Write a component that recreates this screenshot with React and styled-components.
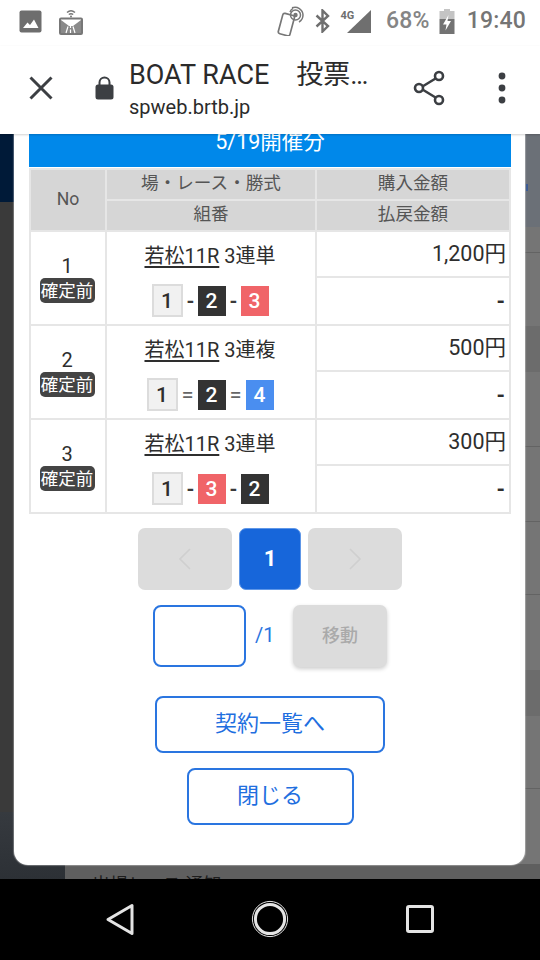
import React from "react";
import styled, { createGlobalStyle } from "styled-components";

const Global = createGlobalStyle`
  html, body { margin: 0; padding: 0; background: #000; }
  #root { width: 540px; height: 960px; }
  * { box-sizing: border-box; }
`;

const FONT = `Roboto, "Noto Sans CJK JP", "Noto Sans", sans-serif`;

const Screen = styled.div`
  width: 540px;
  height: 960px;
  display: flex;
  flex-direction: column;
  overflow: hidden;
  font-family: ${FONT};
`;

const StatusBar = styled.div`
  height: 46px;
  flex: none;
  background: #fff;
  display: flex;
  align-items: center;
  padding: 0 14px 4px 19px;
  color: #7a7a7a;
`;
const StatusIcon = styled.svg`
  display: block;
  flex: none;
  margin-left: ${(p) => p.$ml || 0}px;
`;
const StatusText = styled.span`
  font-size: 23px;
  font-weight: 500;
  line-height: 30px;
  color: ${(p) => p.$color};
  margin-left: ${(p) => p.$ml}px;
  letter-spacing: 0.2px;
`;
const Spacer = styled.div`
  flex: 1;
`;

const Toolbar = styled.div`
  height: 88px;
  flex: none;
  background: #fff;
  display: flex;
  align-items: center;
  padding: 0 34px 5px 29px;
  position: relative;
  z-index: 2;
  box-shadow: 0 1px 2px rgba(0, 0, 0, 0.18);
`;
const TitleBlock = styled.div`
  flex: 1;
  margin: 3px 0 0 15px;
  min-width: 0;
  color: #2b2b2b;
`;
const Title = styled.div`
  font-size: 27px;
  line-height: 32px;
  white-space: pre;
`;
const Url = styled.div`
  font-size: 20px;
  line-height: 24px;
  margin-top: 4px;
`;

const Content = styled.div`
  flex: 1;
  position: relative;
  overflow: hidden;
  display: grid;
  grid-template-columns: 65px 1fr;
`;

const SideColumn = styled.div`
  display: flex;
  flex-direction: column;
`;
const SideBlock = styled.div`
  height: ${(p) => p.$h}px;
  flex: ${(p) => (p.$h ? "none" : 1)};
  background: ${(p) => p.$bg};
`;
const MainColumn = styled.div`
  display: flex;
  flex-direction: column;
`;
const TopBand = styled.div`
  height: 93px;
  background: #6b7077;
  display: flex;
  justify-content: flex-end;
  align-items: flex-end;
  padding: 0 12px 36px 0;
`;
const Mark = styled.div`
  width: 2px;
  height: 7px;
  background: #3b5a92;
`;
const Row = styled.div`
  height: ${(p) => p.$h}px;
  background: ${(p) => (p.$dark ? "#6c6c6c" : "#757575")};
  border-bottom: ${(p) => (p.$line ? "1px solid #636363" : "none")};
`;
const BottomRow = styled.div`
  flex: 1;
  background: #5f5f5f;
  padding: 10px 0 0 27px;
  font-size: 18px;
  line-height: 22px;
  color: #1d1d1d;
  white-space: nowrap;
  overflow: hidden;
`;

const Modal = styled.div`
  position: absolute;
  left: 14px;
  top: -17px;
  width: 511px;
  background: #fff;
  border-radius: 0 0 14px 14px;
  padding: 0 14px 40px 15px;
  display: flex;
  flex-direction: column;
  align-items: center;
  box-shadow: 0 0 1px 1px rgba(255, 255, 255, 0.3);
`;
const DateBar = styled.div`
  width: 482px;
  height: 50px;
  background: #0088ea;
  color: #fff;
  font-size: 21.5px;
  line-height: 50px;
  text-align: center;
`;

const Table = styled.table`
  width: 482px;
  table-layout: fixed;
  border-collapse: collapse;
  margin-top: 1px;
  color: #2e2e2e;
  border: 2px solid #e6e6e6;
`;
const Th = styled.th`
  background: #d6d6d6;
  border: 2px solid #e6e6e6;
  color: #555;
  font-weight: 400;
  font-size: 17.6px;
  height: 31px;
  padding: 0 0 3px;
  line-height: 26px;
  text-align: center;
`;
const Td = styled.td`
  border: 2px solid #e6e6e6;
  padding: 0;
  background: #fff;
  vertical-align: top;
`;
const NoCell = styled(Td)`
  text-align: center;
  vertical-align: top;
  padding: 20px 2px 0 0;
`;
const No = styled.div`
  font-size: 20px;
  line-height: 28px;
`;
const Badge = styled.div`
  display: inline-block;
  width: 55px;
  height: 25px;
  margin-top: -2px;
  border-radius: 5px;
  background: #444;
  color: #fff;
  font-size: 17.5px;
  line-height: 26px;
  vertical-align: top;
  white-space: nowrap;
`;
const RaceCell = styled(Td)`
  text-align: center;
  padding-right: 2px;
`;
const RaceName = styled.div`
  font-size: 20px;
  line-height: 30px;
  margin-top: 9px;
  white-space: nowrap;
`;
const Venue = styled.span`
  text-decoration: underline;
  text-underline-offset: 3px;
`;
const Combo = styled.div`
  display: flex;
  justify-content: center;
  align-items: center;
  gap: 4px;
  margin: 13px 0 0;
  height: 33px;
`;
const Chip = styled.span`
  width: 28px;
  height: 30px;
  display: flex;
  align-items: center;
  justify-content: center;
  font-size: 21px;
  font-weight: 500;
  background: ${(p) => p.$bg};
  color: #fff;
`;
const FirstChip = styled.span`
  width: 31px;
  height: 33px;
  display: flex;
  align-items: center;
  justify-content: center;
  font-size: 21px;
  font-weight: 500;
  background: #f1f1f1;
  border: 2px solid #dcdcdc;
  color: #2e2e2e;
`;
const Sep = styled.span`
  width: ${(p) => (p.$eq ? 12 : 7)}px;
  font-size: ${(p) => (p.$eq ? 22 : 20)}px;
  font-weight: ${(p) => (p.$eq ? 400 : 700)};
  line-height: 24px;
  text-align: center;
  color: ${(p) => (p.$eq ? "#666" : "#3a3a3a")};
`;
const Amount = styled(Td)`
  height: 46px;
  text-align: right;
  padding: 6px 3px 0 0;
  font-size: 21.5px;
  line-height: 32px;
`;
const Payout = styled(Td)`
  height: 48px;
  text-align: right;
  padding: 8px 4px 0 0;
  font-size: 21.5px;
  line-height: 32px;
  font-weight: 700;
`;

const Pager = styled.div`
  display: flex;
  gap: 7px;
  margin-top: 14px;
`;
const PageArrow = styled.div`
  width: 94px;
  height: 62px;
  border-radius: 7px;
  background: #dcdcdc;
  display: flex;
  align-items: center;
  justify-content: center;
`;
const PageCurrent = styled.div`
  width: 62px;
  height: 62px;
  border-radius: 7px;
  background: #1766da;
  border: 1px solid #5f97e8;
  color: #fff;
  font-size: 22px;
  font-weight: 700;
  display: flex;
  align-items: center;
  justify-content: center;
  padding-bottom: 2px;
`;
const JumpRow = styled.div`
  display: flex;
  align-items: center;
  margin-top: 15px;
`;
const PageInput = styled.div`
  width: 93px;
  height: 62px;
  border: 2px solid #2a75e0;
  border-radius: 8px;
  background: #fff;
`;
const PageTotal = styled.span`
  width: 47px;
  padding: 0 0 2px 9px;
  color: #2a75e0;
  font-size: 20px;
`;
const MoveButton = styled.div`
  width: 94px;
  height: 62px;
  border-radius: 7px;
  background: #dcdcdc;
  color: #aaa;
  font-size: 18px;
  font-weight: 500;
  display: flex;
  align-items: center;
  justify-content: center;
  padding-bottom: 5px;
  box-shadow: 0 2px 4px rgba(0, 0, 0, 0.2);
`;
const OutlineButton = styled.div`
  width: ${(p) => p.$w}px;
  height: ${(p) => p.$h}px;
  margin-top: ${(p) => p.$mt}px;
  border: 2px solid #2a75e0;
  border-radius: 8px;
  color: #1f6fdf;
  font-size: 22px;
  display: flex;
  align-items: center;
  justify-content: center;
  padding-bottom: 7px;
  background: #fff;
`;

const NavBar = styled.div`
  height: 81px;
  flex: none;
  background: #000;
  display: grid;
  grid-template-columns: 240px 60px 240px;
  align-items: center;
  justify-items: center;
  padding-bottom: 1px;
`;

const bets = [
  { no: 1, type: "3連単", amount: "1,200円", sep: "-", picks: [1, 2, 3] },
  { no: 2, type: "3連複", amount: "500円", sep: "=", picks: [1, 2, 4] },
  { no: 3, type: "3連単", amount: "300円", sep: "-", picks: [1, 3, 2] },
];
const chipColor = { 2: "#333333", 3: "#f06468", 4: "#4a8ef0" };

const BetRows = ({ bet }) => (
  <>
    <tr>
      <NoCell rowSpan={2}>
        <No>{bet.no}</No>
        <Badge>確定前</Badge>
      </NoCell>
      <RaceCell rowSpan={2}>
        <RaceName>
          <Venue>若松11R</Venue> {bet.type}
        </RaceName>
        <Combo>
          <FirstChip>{bet.picks[0]}</FirstChip>
          <Sep $eq={bet.sep === "="}>{bet.sep}</Sep>
          <Chip $bg={chipColor[bet.picks[1]]}>{bet.picks[1]}</Chip>
          <Sep $eq={bet.sep === "="}>{bet.sep}</Sep>
          <Chip $bg={chipColor[bet.picks[2]]}>{bet.picks[2]}</Chip>
        </Combo>
      </RaceCell>
      <Amount>{bet.amount}</Amount>
    </tr>
    <tr>
      <Payout>-</Payout>
    </tr>
  </>
);

export default function App() {
  return (
    <Screen>
      <Global />
      <StatusBar>
        <StatusIcon width="23" height="23" viewBox="0 0 23 23">
          <rect x="0.5" y="0.5" width="22" height="22" rx="2" fill="#6e6e6e" />
          <path d="M4 18 L8.5 12.5 L11 15 L15 9.5 L19.5 18 Z" fill="#fff" />
        </StatusIcon>
        <StatusIcon $ml={17} width="24" height="27" viewBox="0 0 24 27" fill="none">
          <path d="M8 4.5 Q12 1 16 4.5 M9.8 6.5 Q12 4.8 14.2 6.5" stroke="#777" strokeWidth="1.5" />
          <circle cx="12" cy="8.5" r="1" fill="#777" />
          <rect x="1" y="10.5" width="22" height="15.5" rx="1" stroke="#777" strokeWidth="2" fill="#fff" />
          <path d="M2 12 L10 18 L2 18 Z M22 12 L14 18 L22 18 Z M2 18 H22 V25 H2 Z" fill="#8a8a8a" />
          <path d="M11.5 18 V20 M11.5 21.5 V25 M7 25 L9 18.5 M16 25 L14 18.5" stroke="#fff" strokeWidth="1.2" />
        </StatusIcon>
        <Spacer />
        <StatusIcon width="30" height="30" viewBox="0 0 30 30" fill="none">
          <rect x="5.5" y="8" width="12" height="21" rx="2" transform="rotate(15 11 18)" stroke="#777" strokeWidth="1.7" />
          <circle cx="20.5" cy="9" r="2.2" fill="#777" />
          <circle cx="20.5" cy="9" r="5" stroke="#777" strokeWidth="1.5" />
          <path d="M17 1.8 A8 8 0 0 1 28 9 A8 8 0 0 1 24 16" stroke="#777" strokeWidth="1.5" />
          <path d="M15 6 A7 7 0 0 1 18 2.4" stroke="#777" strokeWidth="1.5" />
        </StatusIcon>
        <StatusIcon $ml={10} width="15" height="24" viewBox="0 0 15 24" fill="none">
          <path d="M1.5 6.5 L13 17 L7.5 22.5 V1.5 L13 7 L1.5 17.5" stroke="#6f6f6f" strokeWidth="2.4" />
        </StatusIcon>
        <StatusIcon $ml={10} width="32" height="25" viewBox="0 0 32 25">
          <path d="M31 1 V24 H7 Z" fill="#6f6f6f" />
          <text x="0.5" y="10" fontFamily="Roboto, sans-serif" fontSize="11" fontWeight="700" fill="#6f6f6f">4G</text>
        </StatusIcon>
        <StatusText $color="#858585" $ml={14}>68%</StatusText>
        <StatusIcon $ml={9} width="16" height="25" viewBox="0 0 16 25">
          <rect x="5" y="0" width="6" height="3" fill="#c4c4c4" />
          <rect x="0.5" y="2" width="15" height="8" fill="#c4c4c4" />
          <rect x="0.5" y="10" width="15" height="15" fill="#737373" />
          <path d="M9.5 6 L4 15.5 H7.5 L6.5 21.5 L12 12 H8.5 Z" fill="#fff" />
        </StatusIcon>
        <StatusText $color="#757575" $ml={12}>19:40</StatusText>
      </StatusBar>

      <Toolbar>
        <svg width="24" height="24" viewBox="0 0 24 24" fill="none" style={{ flex: "none" }}>
          <path d="M1.5 1.5 L22.5 22.5 M22.5 1.5 L1.5 22.5" stroke="#3c3f43" strokeWidth="3" />
        </svg>
        <svg width="19" height="24" viewBox="0 0 19 24" fill="none" style={{ flex: "none", marginLeft: 42 }}>
          <rect x="0.5" y="8.5" width="18" height="15" rx="2.5" fill="#3c3f43" />
          <path d="M4.5 9 V6.5 A5 5 0 0 1 14.5 6.5 V9" stroke="#3c3f43" strokeWidth="2" />
        </svg>
        <TitleBlock>
          <Title>BOAT RACE　投票…</Title>
          <Url>spweb.brtb.jp</Url>
        </TitleBlock>
        <svg width="32" height="36" viewBox="0 0 32 36" fill="none" style={{ flex: "none", marginLeft: -1 }}>
          <path d="M7 18 L25 7 M7 18 L25 29" stroke="#3c3f43" strokeWidth="2.6" />
          <circle cx="6" cy="18" r="4" fill="#fff" stroke="#3c3f43" strokeWidth="2.6" />
          <circle cx="26" cy="6" r="4" fill="#fff" stroke="#3c3f43" strokeWidth="2.6" />
          <circle cx="26" cy="30" r="4" fill="#fff" stroke="#3c3f43" strokeWidth="2.6" />
        </svg>
        <svg width="8" height="32" viewBox="0 0 8 32" style={{ flex: "none", marginLeft: 53 }}>
          <circle cx="4" cy="4" r="3.4" fill="#3c3f43" />
          <circle cx="4" cy="16" r="3.4" fill="#3c3f43" />
          <circle cx="4" cy="28" r="3.4" fill="#3c3f43" />
        </svg>
      </Toolbar>

      <Content>
        <SideColumn>
          <SideBlock $h={68} $bg="#001a38" />
          <SideBlock $h={610} $bg="#3a3a3a" />
          <SideBlock $bg="linear-gradient(#363a3f, #2a2e33)" />
        </SideColumn>
        <MainColumn>
          <TopBand>
            <Mark />
          </TopBand>
          <Row $h={26} $line />
          <Row $h={73} />
          <Row $h={46} $dark />
          <Row $h={75} $line />
          <Row $h={75} $line />
          <Row $h={73} $line />
          <Row $h={75} />
          <Row $h={46} $dark />
          <Row $h={73} $line />
          <Row $h={75} />
          <BottomRow>出場レース 通知</BottomRow>
        </MainColumn>

        <Modal>
          <DateBar>5/19開催分</DateBar>
          <Table>
            <colgroup>
              <col style={{ width: 76 }} />
              <col style={{ width: 210 }} />
              <col />
            </colgroup>
            <thead>
              <tr>
                <Th rowSpan={2}>No</Th>
                <Th>場・レース・勝式</Th>
                <Th>購入金額</Th>
              </tr>
              <tr>
                <Th>組番</Th>
                <Th>払戻金額</Th>
              </tr>
            </thead>
            <tbody>
              {bets.map((b) => (
                <BetRows key={b.no} bet={b} />
              ))}
            </tbody>
          </Table>

          <Pager>
            <PageArrow>
              <svg width="14" height="22" viewBox="0 0 14 22" fill="none">
                <path d="M12 1 L2 11 L12 21" stroke="#cfcfcf" strokeWidth="1.6" />
              </svg>
            </PageArrow>
            <PageCurrent>1</PageCurrent>
            <PageArrow>
              <svg width="14" height="22" viewBox="0 0 14 22" fill="none">
                <path d="M2 1 L12 11 L2 21" stroke="#cfcfcf" strokeWidth="1.6" />
              </svg>
            </PageArrow>
          </Pager>

          <JumpRow>
            <PageInput />
            <PageTotal>/1</PageTotal>
            <MoveButton>移動</MoveButton>
          </JumpRow>

          <OutlineButton $w={230} $h={57} $mt={29}>契約一覧へ</OutlineButton>
          <OutlineButton $w={167} $h={57} $mt={15}>閉じる</OutlineButton>
        </Modal>
      </Content>

      <NavBar>
        <svg width="30" height="33" viewBox="0 0 30 33" fill="none">
          <path d="M27 2.5 V30.5 L3 16.5 Z" stroke="#e4e4e4" strokeWidth="3" strokeLinejoin="round" />
        </svg>
        <svg width="38" height="38" viewBox="0 0 38 38" fill="none">
          <circle cx="19" cy="19" r="17.6" stroke="#e4e4e4" strokeWidth="1" />
          <circle cx="19" cy="19" r="14.6" stroke="#e4e4e4" strokeWidth="3" />
        </svg>
        <svg width="28" height="28" viewBox="0 0 28 28" fill="none">
          <rect x="1.5" y="1.5" width="25" height="25" rx="1.5" stroke="#e4e4e4" strokeWidth="3" />
        </svg>
      </NavBar>
    </Screen>
  );
}
